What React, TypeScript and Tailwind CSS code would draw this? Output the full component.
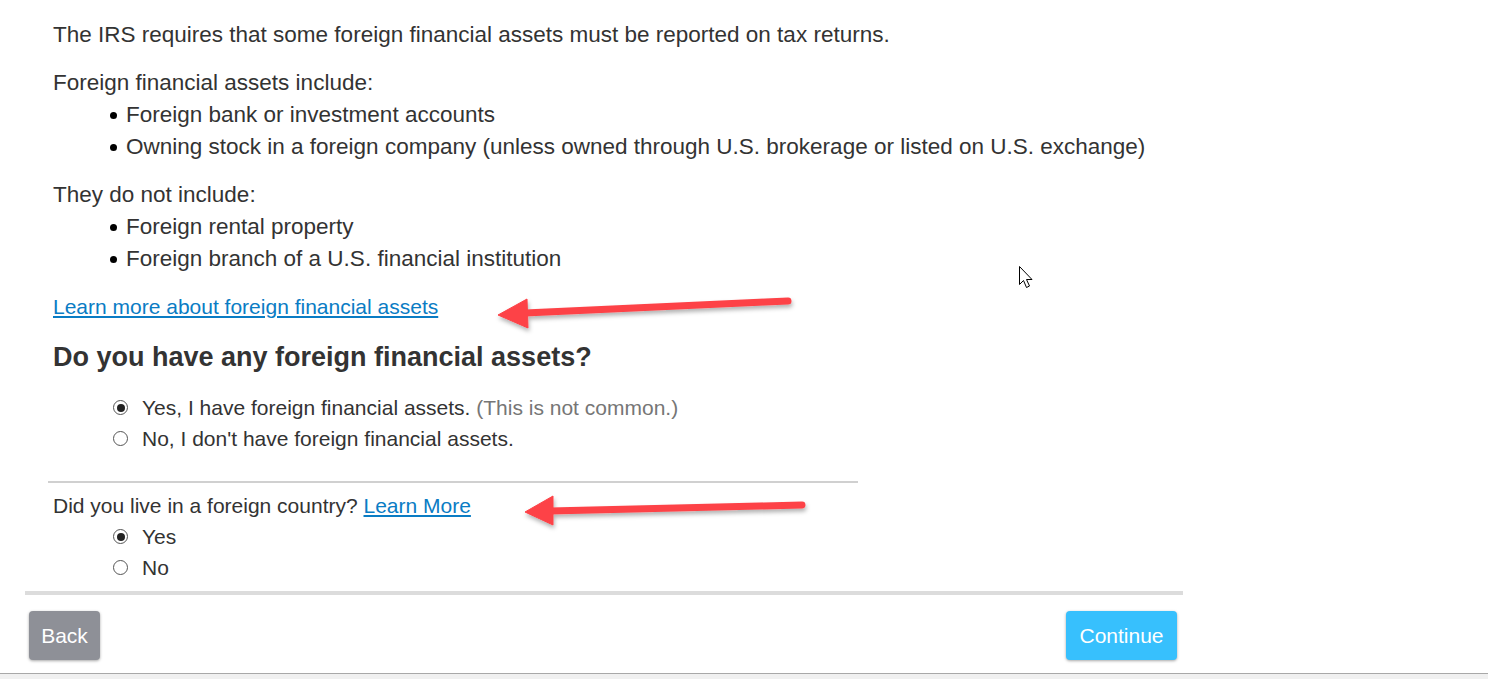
import React from "react";

function Radio({ checked }: { checked?: boolean }) {
  return (
    <span className="inline-flex items-center justify-center w-[15px] h-[15px] rounded-full border border-[#555] bg-white shrink-0">
      {checked && <span className="w-[8px] h-[8px] rounded-full bg-[#222]" />}
    </span>
  );
}

function Bullet({ children }: { children: React.ReactNode }) {
  return (
    <div className="flex items-center h-[32px] pl-[57px]">
      <span className="w-[7px] h-[7px] rounded-full bg-black mr-[9px] shrink-0" />
      <span>{children}</span>
    </div>
  );
}

export default function App() {
  return (
    <div
      className="relative w-[1488px] h-[679px] bg-white overflow-hidden text-[#333]"
      style={{ fontFamily: '"Liberation Sans", Arial, sans-serif' }}
    >
      <div className="w-[1158px] ml-[25px]">
        <div className="pl-[28px] pt-[19px] text-[22.5px] leading-[32px]">
          <p>The IRS requires that some foreign financial assets must be reported on tax returns.</p>
          <p className="mt-[16px]">Foreign financial assets include:</p>
          <Bullet>Foreign bank or investment accounts</Bullet>
          <Bullet>Owning stock in a foreign company (unless owned through U.S. brokerage or listed on U.S. exchange)</Bullet>
          <p className="mt-[16px]">They do not include:</p>
          <Bullet>Foreign rental property</Bullet>
          <Bullet>Foreign branch of a U.S. financial institution</Bullet>
          <p className="mt-[16px]">
            <a className="text-[#0a7cc4] underline text-[21px]">Learn more about foreign financial assets</a>
          </p>
          <h2 className="mt-[18px] text-[27px] font-bold text-[#333]">Do you have any foreign financial assets?</h2>
        </div>
        <div className="pl-[88px] mt-[19px] text-[21px] leading-[31px]">
          <div className="flex items-center gap-[14px]">
            <Radio checked />
            <span>
              Yes, I have foreign financial assets. <span className="text-[#767676]">(This is not common.)</span>
            </span>
          </div>
          <div className="flex items-center gap-[14px]">
            <Radio />
            <span>No, I don't have foreign financial assets.</span>
          </div>
        </div>
        <div className="ml-[23px] w-[810px] mt-[27px] h-[2px] bg-[#d0d0d0]" />
        <div className="pl-[28px] mt-[7px] text-[21px] leading-[31px]">
          <p>
            Did you live in a foreign country? <a className="text-[#0a7cc4] underline">Learn More</a>
          </p>
          <div className="pl-[60px]">
            <div className="flex items-center gap-[14px]">
              <Radio checked />
              <span>Yes</span>
            </div>
            <div className="flex items-center gap-[14px]">
              <Radio />
              <span>No</span>
            </div>
          </div>
        </div>
        <div className="mt-[8px] h-[4px] bg-[#dcdcdc]" />
        <div className="flex justify-between mt-[16px] pl-[4px] pr-[6px]">
          <button className="w-[71px] h-[49px] rounded-[4px] bg-[#8e9097] text-white text-[21px] shadow-[0_1px_3px_rgba(0,0,0,0.35)]">
            Back
          </button>
          <button className="w-[111px] h-[49px] rounded-[4px] bg-[#37c0fd] text-white text-[21px] shadow-[0_1px_3px_rgba(0,0,0,0.35)]">
            Continue
          </button>
        </div>
      </div>
      <div className="absolute left-0 right-0 top-[673px] h-[1px] bg-[#a8a8a8]" />
      <div className="absolute left-0 right-0 top-[674px] bottom-0 bg-[#f0f0f0]" />

      {/* annotation arrows */}
      <svg className="absolute left-0 top-0 pointer-events-none" width="1488" height="679">
        <defs>
          <filter id="sh" x="-10%" y="-50%" width="120%" height="200%">
            <feDropShadow dx="1" dy="3" stdDeviation="2" floodColor="#000" floodOpacity="0.3" />
          </filter>
        </defs>
        <g filter="url(#sh)" fill="#fd4247" stroke="#fd4247">
          <line x1="788" y1="301" x2="525" y2="313" strokeWidth="7" strokeLinecap="round" />
          <polygon points="498,315 527,299 528,328" strokeWidth="1" strokeLinejoin="round" />
        </g>
        <g filter="url(#sh)" fill="#fd4247" stroke="#fd4247">
          <line x1="802" y1="505" x2="550" y2="511" strokeWidth="7" strokeLinecap="round" />
          <polygon points="525,512 553,496 553,525" strokeWidth="1" strokeLinejoin="round" />
        </g>
        {/* mouse cursor */}
        <path
          d="M1019.5 266.5 L1019.5 284.5 L1023.5 280.5 L1026.5 287.5 L1029.5 286 L1026.5 279.5 L1032 279.5 Z"
          fill="#fff"
          stroke="#000"
          strokeWidth="1"
        />
      </svg>
    </div>
  );
}
